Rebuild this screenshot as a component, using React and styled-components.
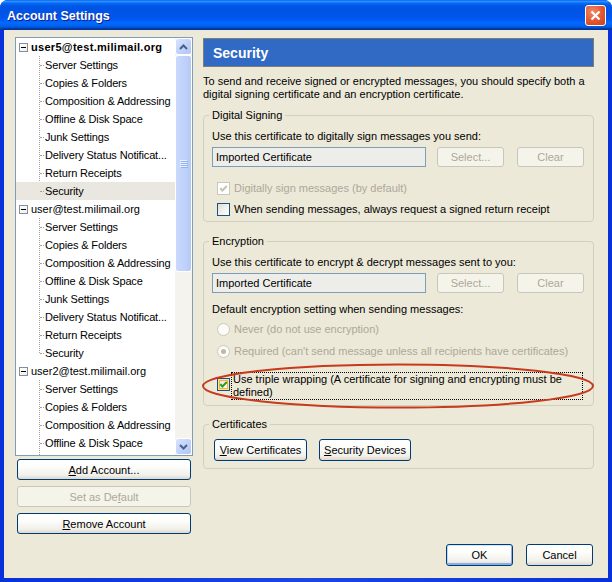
import React from "react";
import styled, { createGlobalStyle, css } from "styled-components";

const GlobalStyle = createGlobalStyle`
  html, body { margin: 0; padding: 0; background: #ffffff; }
  body { font-family: "Liberation Sans", Arial, sans-serif; font-size: 11px; color: #000; }
  * { box-sizing: border-box; }
`;

const Window = styled.div`
  position: relative;
  width: 612px;
  height: 582px;
  display: flex;
  flex-direction: column;
  background: linear-gradient(90deg, #0831d9 0%, #1c46e0 50%, #0831d9 100%);
  border-radius: 8px 8px 0 0;
  overflow: hidden;
`;

const TitleBar = styled.div`
  flex: none;
  height: 30px;
  display: flex;
  align-items: center;
  justify-content: space-between;
  padding: 1px 6px 0 7px;
  background: linear-gradient(
    180deg,
    #0058ee 0%,
    #3593ff 4%,
    #288eff 6%,
    #127dff 8%,
    #036ffc 10%,
    #0262ee 14%,
    #0057e5 20%,
    #0054e3 24%,
    #0055eb 56%,
    #005bf5 66%,
    #026afe 76%,
    #0062ef 86%,
    #0052d6 92%,
    #0040ab 94%,
    #003092 100%
  );
`;

const Title = styled.span`
  color: #ffffff;
  font-family: "Liberation Sans", Arial, sans-serif;
  font-weight: bold;
  font-size: 12.5px;
  text-shadow: 1px 1px 0 #0f1f8a;
`;

const CloseButton = styled.div`
  width: 21px;
  height: 21px;
  border: 1px solid #ffffff;
  border-radius: 3px;
  background: radial-gradient(circle at 35% 30%, #f08a68 0%, #e2562f 55%, #c8401c 100%);
  display: flex;
  align-items: center;
  justify-content: center;
  margin-top: -1px;
`;

const Body = styled.div`
  flex: 1;
  margin: 0 4px 4px 4px;
  background: #ece9d8;
  display: flex;
  gap: 10px;
  padding: 8px 14px 12px 11px;
`;

const LeftColumn = styled.div`
  flex: none;
  width: 178px;
  display: flex;
  flex-direction: column;
  margin-top: -1px;
`;

const Tree = styled.div`
  height: 419px;
  border: 1px solid #7f9db9;
  background: #ffffff;
  display: flex;
  overflow: hidden;
`;

const TreeList = styled.div`
  flex: 1;
  overflow: hidden;
  min-width: 0;
  letter-spacing: -0.15px;
`;

const AccountRow = styled.div`
  height: 18px;
  display: flex;
  align-items: center;
  gap: 3px;
  padding-left: 3px;
  white-space: nowrap;
  font-weight: ${(p) => (p.$bold ? "bold" : "normal")};
  letter-spacing: ${(p) => (p.$bold ? "0.3px" : "0")};
`;

const MinusBox = styled.span`
  flex: none;
  width: 9px;
  height: 9px;
  border: 1px solid #7c8fa4;
  background: linear-gradient(135deg, #ffffff 0%, #f0efe8 100%);
  display: flex;
  align-items: center;
  justify-content: center;
  &::after {
    content: "";
    width: 5px;
    height: 1px;
    background: #000;
  }
`;

const ChildList = styled.div`
  position: relative;
  &::before {
    content: "";
    position: absolute;
    left: 23px;
    top: 0;
    bottom: 9px;
    border-left: 1px dotted #a0a0a0;
  }
`;

const ChildRow = styled.div`
  position: relative;
  height: 18px;
  display: flex;
  align-items: center;
  padding-left: 29px;
  white-space: nowrap;
  overflow: hidden;
  background: ${(p) => (p.$selected ? "#e9e7df" : "transparent")};
  &::before {
    content: "";
    position: absolute;
    left: 24px;
    top: 9px;
    width: 4px;
    border-top: 1px dotted #a0a0a0;
  }
`;

const Scrollbar = styled.div`
  flex: none;
  width: 17px;
  display: flex;
  flex-direction: column;
  background: #f4f3ee;
`;

const ScrollButton = styled.div`
  flex: none;
  height: 17px;
  border: 1px solid #ffffff;
  border-radius: 3px;
  background: linear-gradient(135deg, #d8e4fd 0%, #c1d3fb 50%, #b2c6f5 100%);
  display: flex;
  align-items: center;
  justify-content: center;
`;

const Thumb = styled.div`
  flex: none;
  height: 217px;
  border: 1px solid #ffffff;
  border-radius: 3px;
  background: linear-gradient(90deg, #cad9fd 0%, #c1d3fb 50%, #b5c9f7 100%);
  display: flex;
  flex-direction: column;
  align-items: center;
  justify-content: center;
  gap: 1px;
`;

const Grip = styled.span`
  width: 7px;
  height: 1px;
  background: #eef4fe;
  box-shadow: 1px 1px 0 #8cb0f8;
`;

const TrackSpace = styled.div`
  flex: 1;
`;

const buttonBase = css`
  font-family: "Liberation Sans", Arial, sans-serif;
  font-size: 11px;
  color: #000;
  padding: 0;
  border: 1px solid #003c74;
  border-radius: 3px;
  background: linear-gradient(180deg, #ffffff 0%, #fdfdfb 35%, #f1f0ea 80%, #dcd7cb 100%);
  text-align: center;
  white-space: nowrap;
  &:disabled {
    border-color: #c9c7ba;
    background: #f5f4ea;
    color: #aca899;
  }
`;

const Button = styled.button`
  ${buttonBase}
  flex: none;
  width: ${(p) => p.$w || 67}px;
  height: ${(p) => p.$h || 22}px;
  ${(p) =>
    p.$default &&
    css`
      box-shadow: inset 0 1px 0 #cee7ff, inset 1px 0 0 #bcd4f6, inset -1px 0 0 #89ade4,
        inset 0 -2px 0 #89ade4;
    `}
`;

const SideButton = styled.button`
  ${buttonBase}
  height: 21px;
  margin: ${(p) => (p.$first ? "3px" : "6px")} 2px 0 2px;
`;

const Key = styled.span`
  text-decoration: underline;
`;

const RightColumn = styled.div`
  flex: 1;
  min-width: 0;
  display: flex;
  flex-direction: column;
`;

const Header = styled.div`
  height: 29px;
  background: #316ac5;
  border: 1px solid #7d7d74;
  color: #ffffff;
  font-weight: bold;
  font-size: 14px;
  display: flex;
  align-items: center;
  padding-left: 9px;
`;

const Description = styled.p`
  margin: 8px 0 0 0;
  line-height: 13px;
`;

const Group = styled.fieldset`
  margin: ${(p) => p.$mt}px 0 0 0;
  padding: 0 8px ${(p) => p.$pb}px 8px;
  border: 1px solid #d0d0bf;
  border-radius: 4px;
  min-width: 0;
`;

const Legend = styled.legend`
  padding: 0 3px;
  margin-left: -3px;
  line-height: 13px;
`;

const FieldLabel = styled.div`
  margin-top: ${(p) => p.$mt}px;
  line-height: 13px;
`;

const CertRow = styled.div`
  margin-top: 4px;
  display: flex;
  align-items: center;
  gap: 11px;
`;

const ButtonRow = styled.div`
  display: flex;
  gap: ${(p) => p.$gap || 13}px;
  margin-top: ${(p) => p.$mt || 0}px;
  margin-left: ${(p) => p.$ml || 0}px;
`;

const TextField = styled.div`
  width: 214px;
  height: 20px;
  border: 1px solid #7f9db9;
  background: #edede9;
  padding-left: 3px;
  display: flex;
  align-items: center;
  white-space: nowrap;
`;

const OptionRow = styled.div`
  margin-top: ${(p) => p.$mt}px;
  height: ${(p) => p.$h || 20}px;
  display: flex;
  align-items: center;
  gap: 4px;
  padding-left: 5px;
  color: ${(p) => (p.$disabled ? "#aca899" : "#000")};
  white-space: nowrap;
`;

const CheckBox = styled.span`
  flex: none;
  width: 13px;
  height: 13px;
  border: 1px solid ${(p) => (p.$disabled ? "#cac8bb" : "#1c5180")};
  background: ${(p) =>
    p.$disabled ? "#ffffff" : "linear-gradient(135deg, #dcdcd7 0%, #f4f4f1 60%, #ffffff 100%)"};
  display: flex;
  align-items: center;
  justify-content: center;
  ${(p) =>
    p.$hot &&
    css`
      box-shadow: inset 0 0 0 1px #fedf9c, inset 0 0 0 2px #f8b33c;
    `}
`;

const Radio = styled.span`
  flex: none;
  width: 13px;
  height: 13px;
  border-radius: 50%;
  border: 1px solid #cac8bb;
  background: #fbfbf8;
  display: flex;
  align-items: center;
  justify-content: center;
  &::after {
    content: "";
    display: ${(p) => (p.$checked ? "block" : "none")};
    width: 5px;
    height: 5px;
    border-radius: 50%;
    background: #bcbaac;
  }
`;

const TripleRow = styled.div`
  margin-top: 10px;
  display: flex;
  align-items: flex-start;
  gap: 1px;
  padding-left: 5px;
  & > ${CheckBox} {
    margin-top: 5.5px;
  }
`;

const FocusLabel = styled.div`
  flex: 1;
  margin-right: 2px;
  border: 1px dotted #000;
  padding: 0 1px;
  line-height: 13px;
`;

const Footer = styled.div`
  margin-top: auto;
  display: flex;
  justify-content: flex-end;
  gap: 13px;
  padding-right: 1px;
`;

const Annotation = styled.svg`
  position: absolute;
  left: 202px;
  top: 362px;
  pointer-events: none;
`;

const Check = ({ color }) => (
  <svg width="9" height="9" viewBox="0 0 9 9">
    <path d="M1.3 4.3 L3.4 6.5 L7.8 2" fill="none" stroke={color} strokeWidth="2" />
  </svg>
);

const Chevron = ({ up }) => (
  <svg width="9" height="6" viewBox="0 0 9 6">
    <path
      d={up ? "M1 5 L4.5 1.5 L8 5" : "M1 1 L4.5 4.5 L8 1"}
      fill="none"
      stroke="#4d6185"
      strokeWidth="2"
    />
  </svg>
);

const childNames = [
  "Server Settings",
  "Copies & Folders",
  "Composition & Addressing",
  "Offline & Disk Space",
  "Junk Settings",
  "Delivery Status Notificat...",
  "Return Receipts",
  "Security",
];

const accounts = [
  { name: "user5@test.milimail.org", bold: true, selected: 7 },
  { name: "user@test.milimail.org" },
  { name: "user2@test.milimail.org" },
];

export default function App() {
  return (
    <>
      <GlobalStyle />
      <Window>
        <TitleBar>
          <Title>Account Settings</Title>
          <CloseButton>
            <svg width="11" height="11" viewBox="0 0 11 11">
              <path d="M1.5 1.5 L9.5 9.5 M9.5 1.5 L1.5 9.5" stroke="#ffffff" strokeWidth="2.2" />
            </svg>
          </CloseButton>
        </TitleBar>
        <Body>
          <LeftColumn>
            <Tree>
              <TreeList>
                {accounts.map((a) => (
                  <div key={a.name}>
                    <AccountRow $bold={a.bold}>
                      <MinusBox />
                      {a.name}
                    </AccountRow>
                    <ChildList>
                      {childNames.map((c, i) => (
                        <ChildRow key={c} $selected={a.selected === i}>
                          {c}
                        </ChildRow>
                      ))}
                    </ChildList>
                  </div>
                ))}
              </TreeList>
              <Scrollbar>
                <ScrollButton>
                  <Chevron up />
                </ScrollButton>
                <Thumb>
                  <Grip />
                  <Grip />
                  <Grip />
                  <Grip />
                </Thumb>
                <TrackSpace />
                <ScrollButton>
                  <Chevron />
                </ScrollButton>
              </Scrollbar>
            </Tree>
            <SideButton $first>
              <Key>A</Key>dd Account...
            </SideButton>
            <SideButton disabled>
              Set as De<Key>f</Key>ault
            </SideButton>
            <SideButton>
              <Key>R</Key>emove Account
            </SideButton>
          </LeftColumn>

          <RightColumn>
            <Header>Security</Header>
            <Description>
              To send and receive signed or encrypted messages, you should specify both a
              <br />
              digital signing certificate and an encryption certificate.
            </Description>

            <Group $mt={8} $pb={2}>
              <Legend>Digital Signing</Legend>
              <FieldLabel $mt={8}>Use this certificate to digitally sign messages you send:</FieldLabel>
              <CertRow>
                <TextField>Imported Certificate</TextField>
                <ButtonRow>
                  <Button disabled $h={20}>Select...</Button>
                  <Button disabled $h={20}>Clear</Button>
                </ButtonRow>
              </CertRow>
              <OptionRow $mt={11} $disabled>
                <CheckBox $disabled>
                  <Check color="#c4c2b4" />
                </CheckBox>
                Digitally sign messages (by default)
              </OptionRow>
              <OptionRow $mt={1}>
                <CheckBox />
                When sending messages, always request a signed return receipt
              </OptionRow>
            </Group>

            <Group $mt={13} $pb={5}>
              <Legend>Encryption</Legend>
              <FieldLabel $mt={8}>Use this certificate to encrypt &amp; decrypt messages sent to you:</FieldLabel>
              <CertRow>
                <TextField>Imported Certificate</TextField>
                <ButtonRow>
                  <Button disabled $h={20}>Select...</Button>
                  <Button disabled $h={20}>Clear</Button>
                </ButtonRow>
              </CertRow>
              <FieldLabel $mt={10}>Default encryption setting when sending messages:</FieldLabel>
              <OptionRow $mt={2} $h={22} $disabled>
                <Radio />
                Never (do not use encryption)
              </OptionRow>
              <OptionRow $mt={0} $h={22} $disabled>
                <Radio $checked />
                Required (can't send message unless all recipients have certificates)
              </OptionRow>
              <TripleRow>
                <CheckBox $hot>
                  <Check color="#21a121" />
                </CheckBox>
                <FocusLabel>
                  Use triple wrapping (A certificate for signing and encrypting must be
                  <br />
                  defined)
                </FocusLabel>
              </TripleRow>
            </Group>

            <Group $mt={12} $pb={7}>
              <Legend>Certificates</Legend>
              <ButtonRow $mt={8} $ml={2} $gap={12}>
                <Button $w={93}>
                  <Key>V</Key>iew Certificates
                </Button>
                <Button $w={92}>
                  <Key>S</Key>ecurity Devices
                </Button>
              </ButtonRow>
            </Group>

            <Footer>
              <Button $default>OK</Button>
              <Button>Cancel</Button>
            </Footer>
          </RightColumn>
        </Body>
        <Annotation width="396" height="48" viewBox="0 0 396 48">
          <ellipse cx="196" cy="24" rx="195" ry="21.5" fill="none" stroke="#c73a1c" strokeWidth="2" />
        </Annotation>
      </Window>
    </>
  );
}
